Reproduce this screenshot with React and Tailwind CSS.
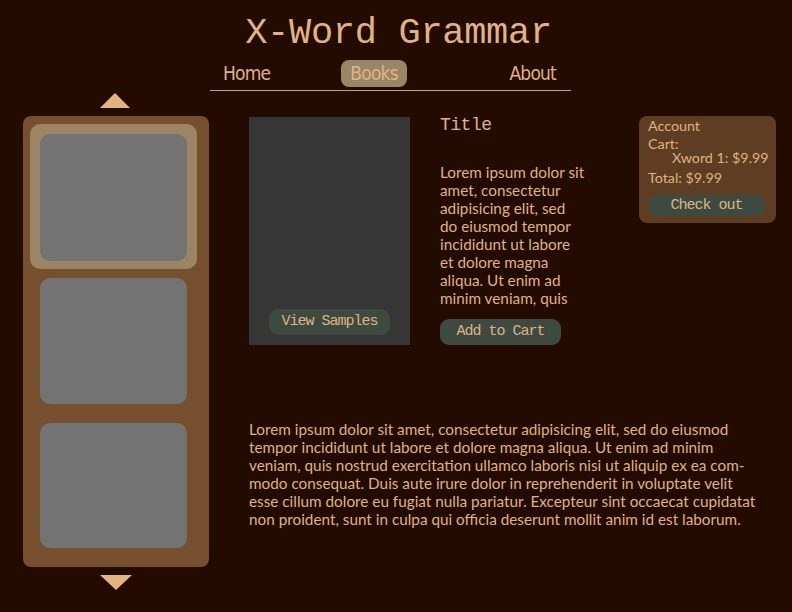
import React from 'react';

const mono = "font-['Liberation_Mono','DejaVu_Sans_Mono',monospace]";
const body = "font-['Lato','Open_Sans',sans-serif]";

const descLines = [
  'Lorem ipsum dolor sit',
  'amet, consectetur',
  'adipisicing elit, sed',
  'do eiusmod tempor',
  'incididunt ut labore',
  'et dolore magna',
  'aliqua. Ut enim ad',
  'minim veniam, quis',
];

const paraLines = [
  'Lorem ipsum dolor sit amet, consectetur adipisicing elit, sed do eiusmod',
  'tempor incididunt ut labore et dolore magna aliqua. Ut enim ad minim',
  'veniam, quis nostrud exercitation ullamco laboris nisi ut aliquip ex ea com-',
  'modo consequat. Duis aute irure dolor in reprehenderit in voluptate velit',
  'esse cillum dolore eu fugiat nulla pariatur. Excepteur sint occaecat cupidatat',
  'non proident, sunt in culpa qui officia deserunt mollit anim id est laborum.',
];

function Arrow({ down }) {
  return (
    <svg width="32" height="15" viewBox="0 0 32 15" className="block mx-auto">
      {down ? (
        <polygon points="0,0 32,0 16,15" fill="#e3b47f" />
      ) : (
        <polygon points="15,0 30,15 0,15" fill="#e3b47f" />
      )}
    </svg>
  );
}

const btn = `${mono} text-[15px] tracking-[-1px] rounded-[9px] bg-[#3e4a40] text-[#dfb383]`;

export default function App() {
  return (
    <div className={`w-[792px] h-[612px] bg-[#240b02] text-[#dfb383] overflow-hidden ${body}`}>
      {/* Header */}
      <header className="flex flex-col pt-[13px]">
        <h1 className={`${mono} self-center ml-[5px] text-[37px] leading-[40px] tracking-[-0.3px]`}>X-Word Grammar</h1>
        <nav className="mt-[7px] ml-[210px] w-[361px] flex items-center px-[13px] pb-[3px] border-b border-[#c9a27a] font-['DejaVu_Sans_Condensed',sans-serif] text-[19px] tracking-[-0.8px] leading-[27px]">
          <a>Home</a>
          <a className="ml-[71px] px-[9px] rounded-[8px] bg-[#9a8566]">Books</a>
          <a className="ml-auto mr-[2px]">About</a>
        </nav>
      </header>

      <div className="flex mt-[2px]">
        {/* Sidebar */}
        <aside className="ml-[23px] w-[186px] flex flex-col">
          <Arrow />
          <div className="mt-[8px] h-[451px] rounded-[8px] bg-[#754f2e] flex flex-col pl-[7px] pr-[12px] pt-[8px]">
            <div className="h-[145px] rounded-[10px] bg-[#9c8464] p-[10px] pb-[8px]">
              <div className="h-full rounded-[10px] bg-[#737373]" />
            </div>
            <div className="mx-[10px] mt-[9px] h-[126px] rounded-[10px] bg-[#737373]" />
            <div className="mx-[10px] mt-[19px] h-[125px] rounded-[10px] bg-[#737373]" />
          </div>
          <div className="mt-[8px]">
            <Arrow down />
          </div>
        </aside>

        {/* Main */}
        <main className="ml-[40px] pt-[24px] flex-1">
          <div className="flex items-start">
            <div className="w-[161px] h-[228px] bg-[#363636] flex flex-col justify-end items-center pb-[10px]">
              <button className={`${btn} h-[26px] w-[121px]`}>View Samples</button>
            </div>

            <div className="ml-[30px] w-[160px] -mt-[3px]">
              <h2 className={`${mono} text-[18px] leading-[22px] tracking-[-0.5px]`}>Title</h2>
              <p className="mt-[27px] text-[15.3px] leading-[18px]">
                {descLines.map((l) => (
                  <span key={l} className="block whitespace-nowrap">{l}</span>
                ))}
              </p>
              <button className={`${btn} mt-[12px] h-[26px] w-[121px]`}>Add to Cart</button>
            </div>

            <div className="ml-[39px] w-[137px] h-[107px] -mt-[1px] rounded-[8px] bg-[#5e3d22] px-[9px] pt-[2px] text-[14.3px] leading-[16px] whitespace-nowrap">
              <div>Account</div>
              <div className="mt-[2px]">Cart:</div>
              <div className="pl-[24px] -mt-[2px]">Xword 1: $9.99</div>
              <div className="mt-[4px]">Total: $9.99</div>
              <button className={`${btn} mt-[9px] h-[21px] w-[117px] leading-[21px]`}>Check out</button>
            </div>
          </div>

          <p className="mt-[75px] text-[15.3px] leading-[18px]">
            {paraLines.map((l) => (
              <span key={l} className="block whitespace-nowrap">{l}</span>
            ))}
          </p>
        </main>
      </div>
    </div>
  );
}
